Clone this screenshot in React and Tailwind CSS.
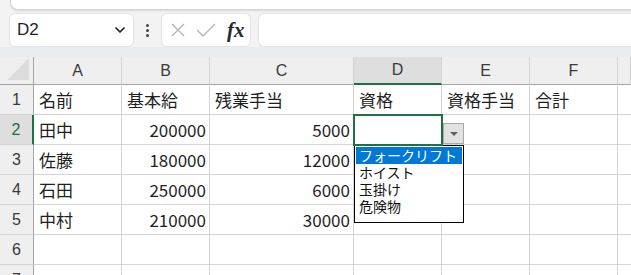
import { ChevronDown } from 'lucide-react'

const COLS = ['A', 'B', 'C', 'D', 'E', 'F', '']

const ROWS = [
  ['名前', '基本給', '残業手当', '資格', '資格手当', '合計'],
  ['田中', 200000, 5000, '', '', ''],
  ['佐藤', 180000, 12000, '', '', ''],
  ['石田', 250000, 6000, '', '', ''],
  ['中村', 210000, 30000, '', '', ''],
  ['', '', '', '', '', ''],
  ['', '', '', '', '', ''],
]

const OPTIONS = ['フォークリフト', 'ホイスト', '玉掛け', '危険物']

const JP = "font-['Noto_Sans_CJK_JP','Noto_Sans',sans-serif]"

function Cell({ value, selected }) {
  const isNum = typeof value === 'number'
  return (
    <div
      className={`h-[30px] border-r border-b border-[#d4d4d4] bg-white flex items-center overflow-visible whitespace-nowrap text-[17px] text-[#1f1f1f] ${
        isNum ? 'justify-end pr-[3px]' : 'pl-[5px]'
      } ${selected ? 'outline-2 outline-[#1e7145] -outline-offset-1 relative z-10' : ''}`}
    >
      {value}
    </div>
  )
}

export default function App() {
  return (
    <div className={`w-[631px] h-[275px] overflow-hidden bg-[#f3f3f3] relative ${JP}`}>
      {/* ribbon edge */}
      <div className="h-[10px] ml-[10px] bg-white rounded-bl-lg border-b border-l border-[#d6d6d6] shadow-[0_1px_2px_rgba(0,0,0,0.12)]" />

      {/* formula bar */}
      <div className="flex items-center h-[37px] pt-[3px]">
        <div className="ml-[9px] w-[125px] h-[34px] bg-white rounded-md border border-[#e3e3e3] flex items-center pl-[7px] pr-[5px]">
          <span className="flex-1 text-[17px] text-[#1f1f1f] font-['Liberation_Sans',sans-serif]">D2</span>
          <ChevronDown size={16} strokeWidth={2.6} className="text-[#222]" />
        </div>
        <div className="w-[27px] flex flex-col items-center gap-[2px]">
          <span className="w-[3px] h-[3px] rounded-full bg-[#444]" />
          <span className="w-[3px] h-[3px] rounded-full bg-[#444]" />
          <span className="w-[3px] h-[3px] rounded-full bg-[#444]" />
        </div>
        <div className="w-[90px] h-[34px] bg-white rounded-md border border-[#e3e3e3] flex items-center pl-[8px] gap-[10px]">
          <svg width="16" height="16" viewBox="0 0 16 16" fill="none" stroke="#b4b4b4" strokeWidth="1.3">
            <path d="M2 2L14 14M14 2L2 14" />
          </svg>
          <svg width="20" height="16" viewBox="0 0 20 16" fill="none" stroke="#b4b4b4" strokeWidth="1.3">
            <path d="M1 8L7 14L19 2" />
          </svg>
          <span className="ml-[1px] text-[21px] italic font-semibold font-['Liberation_Serif',serif] text-[#2a2a2a] leading-none">fx</span>
        </div>
        <div className="ml-[7px] flex-1 h-[34px] bg-white rounded-l-md border border-r-0 border-[#e3e3e3]" />
      </div>

      <div className="h-[10px] bg-[#e9edef]" />

      {/* sheet */}
      <div className="grid grid-cols-[34px_88px_88px_144px_88px_88px_88px_1fr]">
        <div className="h-[28px] bg-[#efefef] border-r border-b border-[#a6a6a6] relative overflow-hidden">
          <div className="absolute right-[4px] bottom-[4px] w-0 h-0 border-l-[22px] border-l-transparent border-b-[22px] border-b-[#dcdcdc]" />
        </div>
        {COLS.map((c, i) => (
          <div
            key={i}
            className={`h-[28px] flex items-center justify-center text-[16px] text-[#3a3a3a] font-['Liberation_Sans',sans-serif] border-r border-[#d4d4d4] ${
              c === 'D'
                ? 'bg-[#dedede] border-b-2 border-b-[#1e7145] text-[#1e6b40]'
                : 'bg-[#efefef] border-b border-b-[#a6a6a6]'
            }`}
          >
            {c}
          </div>
        ))}

        {ROWS.map((row, r) => (
          <Row key={r} n={r + 1} row={row} />
        ))}
      </div>

      {/* validation dropdown */}
      <div className="absolute left-[443px] top-[123px] w-[21px] h-[21px] bg-[#e1e1e1] border border-[#a9a9a9] flex items-center justify-center">
        <div className="w-0 h-0 border-l-[4px] border-r-[4px] border-t-[4px] border-l-transparent border-r-transparent border-t-[#606060]" />
      </div>
      <div className="absolute left-[354px] top-[145px] w-[110px] h-[78px] bg-white border border-black pt-[1px] px-[1px] text-[14px] text-[#111]">
        {OPTIONS.map((o, i) => (
          <div
            key={o}
            className={`pl-[3px] h-[17px] leading-[17px] whitespace-nowrap ${i === 0 ? 'bg-[#0078d7] text-white' : ''}`}
          >
            {o}
          </div>
        ))}
      </div>
    </div>
  )
}

function Row({ n, row }) {
  const active = n === 2
  return (
    <>
      <div
        className={`h-[30px] flex items-center justify-center text-[16px] font-['Liberation_Sans',sans-serif] border-b border-[#d4d4d4] ${
          active
            ? 'bg-[#dedede] border-r-2 border-r-[#1e7145] text-[#1e6b40]'
            : 'bg-[#efefef] border-r border-r-[#a6a6a6] text-[#3a3a3a]'
        }`}
      >
        {n}
      </div>
      {row.map((v, i) => (
        <Cell key={i} value={v} selected={active && i === 3} />
      ))}
      <div className="h-[30px] bg-white border-b border-[#d4d4d4]" />
    </>
  )
}
